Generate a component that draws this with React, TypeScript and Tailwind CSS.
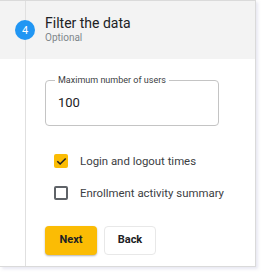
import React from "react";

export default function App() {
  return (
    <div className="min-h-screen bg-white" style={{ fontFamily: "Roboto, 'Liberation Sans', sans-serif" }}>
      <div className="w-[256px] border-t border-r border-b border-[#dadada] shadow-[2px_2px_3px_rgba(120,120,180,0.18)] bg-white">
        {/* Header */}
        <div className="flex h-[58px] bg-[#f3f3f3]">
          <div className="w-[45px] flex flex-col pl-[15px]">
            <div className="ml-[10px] w-px h-[19px] bg-[#e0e0e0]" />
            <div className="w-[20px] h-[20px] rounded-full bg-[#2196f3] flex items-center justify-center text-white text-[11px] leading-none">
              4
            </div>
            <div className="ml-[10px] w-px flex-1 bg-[#e0e0e0]" />
          </div>
          <div className="pt-[14px]">
            <div className="text-[14px] leading-[16px] text-[#202124]">Filter the data</div>
            <div className="text-[10px] leading-[13px] text-[#80868b]">Optional</div>
          </div>
        </div>
        {/* Body */}
        <div className="flex">
          <div className="w-[26px] border-r border-[#e0e0e0] shrink-0" />
          <div className="pl-[19px] pt-[15px] pb-[11px]">
            <fieldset className="w-[174px] border border-[#c4c4c4] rounded-[4px] px-[9px]">
              <legend className="px-[3px] text-[9px] leading-[12px] text-[#3c4043]">Maximum number of users</legend>
              <div className="pl-[3px] pt-[9px] pb-[14px] text-[13px] leading-[16px] text-[#202124]">100</div>
            </fieldset>
            <div className="mt-[28px] pl-[9px] flex flex-col gap-[18px]">
              <div className="flex items-center h-[14px]">
                <div className="w-[14px] h-[14px] rounded-[2px] bg-[#fbbc04] flex items-center justify-center">
                  <svg width="11" height="11" viewBox="0 0 24 24" fill="none" stroke="#202124" strokeWidth="3.4" strokeLinecap="square">
                    <path d="M4 12.5l5 5L20 6.5" />
                  </svg>
                </div>
                <span className="ml-[12px] text-[11.4px] leading-[14px] text-[#3c4043] -mt-[1px]">Login and logout times</span>
              </div>
              <div className="flex items-center h-[14px]">
                <div className="w-[14px] h-[14px] rounded-[2px] border-2 border-[#5f6368] bg-white" />
                <span className="ml-[12px] text-[11.4px] leading-[14px] text-[#3c4043] -mt-[1px]">Enrollment activity summary</span>
              </div>
            </div>
            <div className="mt-[26px] flex gap-[7px]">
              <button className="w-[52px] h-[29px] rounded-[4px] bg-[#fbbc04] shadow-[0_1px_2px_rgba(0,0,0,0.3)] text-[11px] font-bold text-[#202124]">
                Next
              </button>
              <button className="w-[52px] h-[29px] rounded-[4px] bg-white border border-[#e8e8e8] text-[11px] font-bold text-[#202124]">
                Back
              </button>
            </div>
          </div>
        </div>
      </div>
    </div>
  );
}
